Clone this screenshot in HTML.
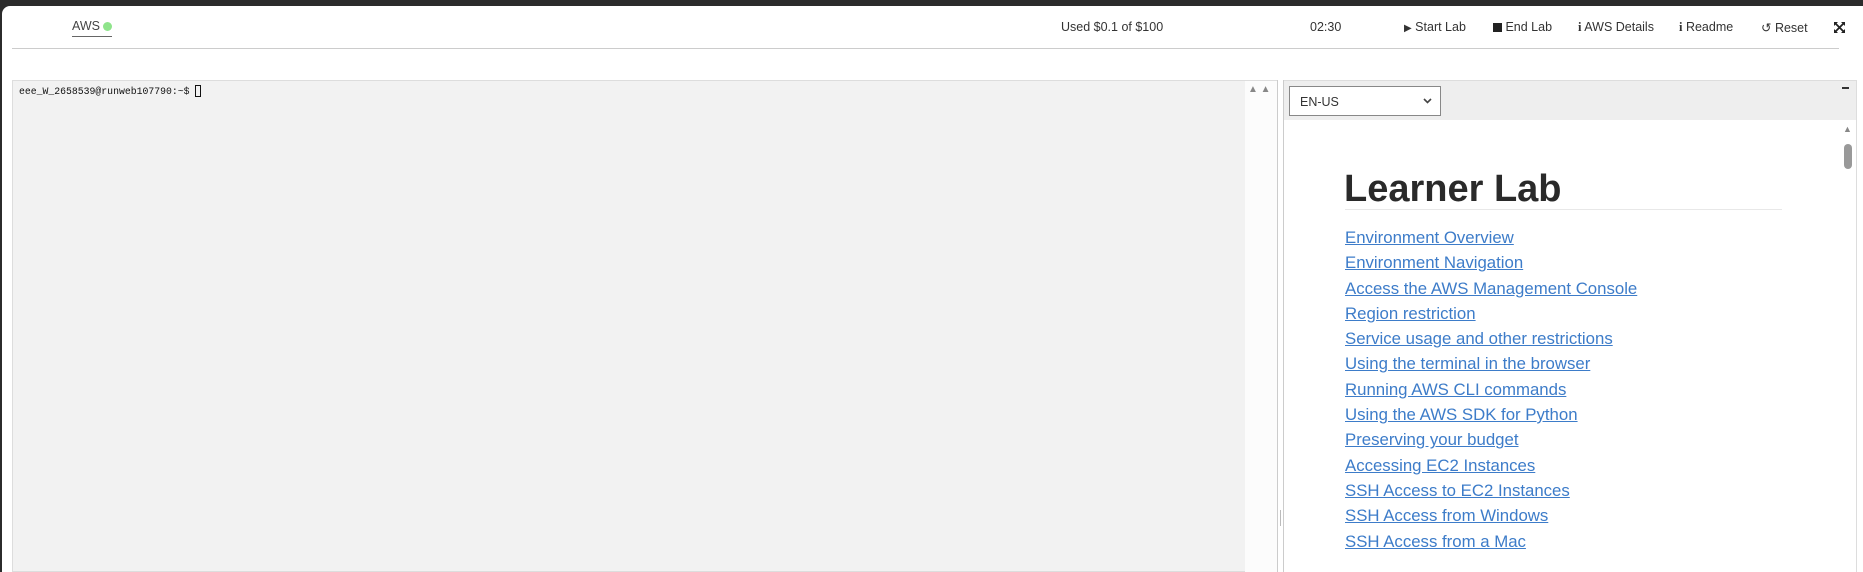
<!DOCTYPE html>
<html><head><meta charset="utf-8"><style>
*{margin:0;padding:0;box-sizing:border-box}
body{width:1863px;height:572px;background:#2b2b2b;position:relative;overflow:hidden;font-family:"Liberation Sans",sans-serif}
#page{position:absolute;left:2px;top:6px;right:0;bottom:0;background:#fff;border-top-left-radius:8px}
.a{position:absolute;white-space:nowrap}
.hd{font-size:12.5px;color:#333;top:20px}
.sel{position:absolute;left:1289px;top:86px;width:152px;height:30px;border:1px solid #888;background:#fff;font-size:12.5px;color:#333;padding:8px 0 0 10px}
.links a{display:block;color:#3d7cc9;text-decoration:underline;font-size:16.8px;height:25.3px;line-height:25.3px}
</style></head><body>
<div id="page"></div>
<div class="a" style="left:72px;top:19px;font-size:12.5px;color:#444;border-bottom:1px solid #666;padding-bottom:3px">AWS <span style="display:inline-block;width:9px;height:9px;border-radius:50%;background:#8fe48b;vertical-align:-1px"></span></div>
<div class="a" style="left:12px;top:48px;width:1827px;height:1px;background:#ccc"></div>
<div class="a hd" style="left:1061px">Used $0.1 of $100</div>
<div class="a hd" style="left:1310px">02:30</div>
<div class="a hd" style="left:1404px"><span style="font-size:10px">▶</span> Start Lab</div>
<div class="a hd" style="left:1493px"><span style="display:inline-block;width:9px;height:9px;background:#222;vertical-align:-1px"></span> End Lab</div>
<div class="a hd" style="left:1578px"><b style="font-family:'Liberation Serif'">i</b> AWS Details</div>
<div class="a hd" style="left:1679px"><b style="font-family:'Liberation Serif'">i</b> Readme</div>
<div class="a hd" style="left:1761px"><span>↺</span> Reset</div>
<svg class="a" style="left:1834px;top:22px" width="11" height="11" viewBox="0 0 11 11"><path d="M0 0h4L0 4zM11 0v4L7 0zM0 11V7l4 4zM11 11H7l4-4z" fill="#222"/><path d="M1.5 1.5l8 8M9.5 1.5l-8 8" stroke="#222" stroke-width="1.8"/></svg>
<!-- terminal -->
<div class="a" style="left:12px;top:80px;width:1233px;height:492px;background:#f2f2f2;border:1px solid #ddd;border-right:none"></div>
<div class="a" style="left:19px;top:85px;font-family:'Liberation Mono',monospace;font-size:9.8px;color:#111">eee_W_2658539@runweb107790:~$ <span style="display:inline-block;width:6px;height:12px;border:1px solid #111;vertical-align:-3px"></span></div>
<div class="a" style="left:1245px;top:80px;width:32px;height:492px;background:#fcfcfc;border-top:1px solid #ddd"></div>
<div class="a" style="left:1248px;top:84px;font-size:10px;color:#888">▲ ▲</div>
<div class="a" style="left:1277px;top:80px;width:1px;height:492px;background:#ccc"></div>
<div class="a" style="left:1283px;top:80px;width:1px;height:492px;background:#ccc"></div>
<div class="a" style="left:1280px;top:510px;width:1px;height:16px;background:#bbb"></div>
<!-- right panel -->
<div class="a" style="left:1284px;top:80px;width:572px;height:40px;background:#eee;border-top:1px solid #ddd"></div>
<div class="a" style="left:1856px;top:80px;width:1px;height:492px;background:#ddd"></div>
<div class="sel">EN-US<svg style="position:absolute;right:8px;top:11px" width="9" height="6" viewBox="0 0 9 6"><path d="M1 1l3.5 3.5L8 1" stroke="#444" stroke-width="1.6" fill="none"/></svg></div>
<div class="a" style="left:1842px;top:87px;width:7px;height:2px;background:#333"></div>
<div class="a" style="left:1843px;top:124px;font-size:9px;color:#888">▲</div>
<div class="a" style="left:1844px;top:144px;width:8px;height:25px;border-radius:4px;background:#999"></div>
<div class="a" style="left:1344px;top:168px;font-size:38px;font-weight:bold;color:#2a2a2a">Learner Lab</div>
<div class="a" style="left:1345px;top:209px;width:437px;height:1px;background:#e8e8e8"></div>
<div class="a links" style="left:1345px;top:225px">
<a>Environment Overview</a><a>Environment Navigation </a><a>Access the AWS Management Console </a><a>Region restriction </a><a>Service usage and other restrictions </a><a>Using the terminal in the browser </a><a>Running AWS CLI commands </a><a>Using the AWS SDK for Python </a><a>Preserving your budget </a><a>Accessing EC2 Instances </a><a>SSH Access to EC2 Instances </a><a>SSH Access from Windows</a><a>SSH Access from a Mac</a>
</div>
</body></html>
